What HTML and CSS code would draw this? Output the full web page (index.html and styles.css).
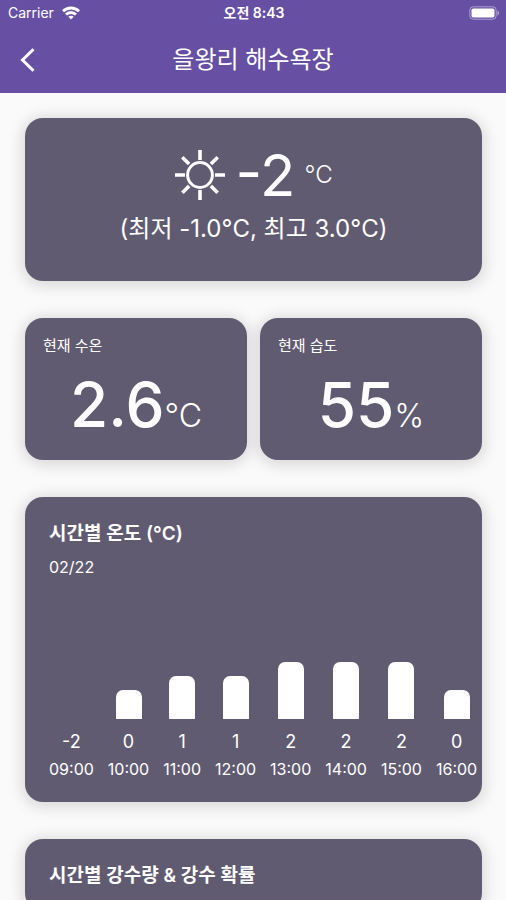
FILE: index.html
```
<!doctype html>
<html lang="ko">
    <head>
        <meta charset="utf-8">
        <meta name="viewport" content="width=device-width, initial-scale=1">
        <title>을왕리 해수욕장</title>
        <link rel="stylesheet" href="styles.css">
    </head>
    <body>
        <header class="header">
            <div class="status">
                <div class="carrier">
                    <span>Carrier</span>
                    <svg width="18" height="14" viewBox="0 0 18 14" fill="none" stroke="#fff" stroke-width="2.8">
                        <path d="M1 5.2C5.4 .9 12.6 .9 17 5.2"/>
                        <path d="M4 8.6c2.8-2.8 7.2-2.8 10 0"/>
                        <path d="M9 13.4l-2.6-2.7c1.5-1.3 3.7-1.3 5.2 0z" fill="#fff" stroke="none"/>
                    </svg>
                </div>
                <time class="clock">오전 8:43</time>
                <svg class="battery" width="31" height="14" viewBox="0 0 31 14">
                    <rect x=".8" y=".8" width="26.4" height="12.4" rx="3.5" fill="none" stroke="#fff" stroke-opacity=".45"/>
                    <rect x="2.5" y="2.5" width="23" height="9" rx="1.8" fill="#fff"/>
                    <path d="M28.5 4.5c2 .8 2 4.2 0 5z" fill="#fff" fill-opacity=".5"/>
                </svg>
            </div>
            <div class="nav">
                <button class="back" type="button" aria-label="뒤로">
                    <svg width="16" height="24" viewBox="0 0 16 24" fill="none" stroke="#fff" stroke-width="3">
                        <path d="M13.5 1.2L2.5 12l11 10.8"/>
                    </svg>
                </button>
                <h1>을왕리 해수욕장</h1>
            </div>
        </header>
        <main class="content">
            <section class="card weather">
                <div class="now">
                    <svg width="52" height="52" viewBox="0 0 52 52" fill="none" stroke="#fff" stroke-width="3.6">
                        <circle cx="26" cy="26" r="12.4" stroke-width="3"/>
                        <path d="M26 1v10M26 41v10M1 26h10M41 26h10M8.3 8.3l6.8 6.8M36.9 36.9l6.8 6.8M8.3 43.7l6.8-6.8M36.9 15.1l6.8-6.8"/>
                    </svg>
                    <span class="temp">-2</span>
                    <span class="unit">°C</span>
                </div>
                <p class="range">(최저 -1.0°C, 최고 3.0°C)</p>
            </section>
            <div class="pair">
                <section class="card stat">
                    <h2>현재 수온</h2>
                    <p><strong>2.6</strong>°C</p>
                </section>
                <section class="card stat">
                    <h2>현재 습도</h2>
                    <p><strong>55</strong>%</p>
                </section>
            </div>
            <section class="card hourly">
                <h2>시간별 온도 (°C)</h2>
                <p class="date">02/22</p>
                <ol class="chart">
                    <li><span>-2</span><time>09:00</time></li>
                    <li><i style="height: 29px"></i><span>0</span><time>10:00</time></li>
                    <li><i style="height: 43px"></i><span>1</span><time>11:00</time></li>
                    <li><i style="height: 43px"></i><span>1</span><time>12:00</time></li>
                    <li><i style="height: 57px"></i><span>2</span><time>13:00</time></li>
                    <li><i style="height: 57px"></i><span>2</span><time>14:00</time></li>
                    <li><i style="height: 57px"></i><span>2</span><time>15:00</time></li>
                    <li><i style="height: 29px"></i><span>0</span><time>16:00</time></li>
                </ol>
            </section>
            <section class="card hourly">
                <h2>시간별 강수량 &amp; 강수 확률</h2>
            </section>
        </main>
    </body>
</html>
```

FILE: styles.css
```
* { box-sizing: border-box; }
html { height: 100%; overflow: hidden; }
body {
    height: 100%;
    margin: 0;
    overflow: hidden;
    background: #fafafa;
    color: #fff;
    font-family: Inter, "Noto Sans CJK KR", sans-serif;
}
h1, h2, p, ol { margin: 0; padding: 0; font-weight: 400; }
svg { display: block; flex: none; }

/* header */
.header { background: #6750a4; }
.status {
    display: grid;
    grid-template-columns: 1fr auto 1fr;
    align-items: center;
    height: 26px;
    padding: 0 6px 0 8px;
    font-size: 14px;
    line-height: 26px;
}
.carrier { display: flex; align-items: center; gap: 8px; }
.clock { font-weight: 600; }
.battery { justify-self: end; }
.nav {
    display: grid;
    grid-template-columns: 56px 1fr 56px;
    align-items: center;
    height: 67px;
}
.nav h1 { font-size: 24px; line-height: 32px; text-align: center; }
.back {
    display: flex;
    justify-content: center;
    padding: 8px 0;
    border: 0;
    background: none;
    cursor: pointer;
}

/* cards */
.content { display: flex; flex-direction: column; gap: 37px; padding: 25px 24px 25px 25px; }
.card { border-radius: 18px; background: #615b71; box-shadow: 0 2px 14px 4px rgba(0,0,0,0.12); }

.weather { padding: 27px 16px 34px; }
.now { display: flex; align-items: center; justify-content: center; gap: 9px; height: 60px; }
.temp { font-size: 58px; line-height: 60px; }
.unit { font-size: 24px; line-height: 32px; font-weight: 300; }
.range { margin-top: 6px; font-size: 24px; line-height: 36px; text-align: center; }

.pair { display: grid; grid-template-columns: 1fr 1fr; gap: 13px; }
.stat { padding: 16px 18px 8px; }
.stat h2 { font-size: 15px; line-height: 24px; }
.stat p { margin-top: 11px; font-size: 32px; line-height: 72px; text-align: center; font-weight: 300; }
.stat strong { font-size: 62px; font-weight: 500; }

.hourly { padding: 22px 0 20px 24px; overflow: hidden; }
.hourly h2 { font-size: 19px; line-height: 30px; font-weight: 600; }
.date { margin-top: 6px; font-size: 16px; line-height: 24px; }
.chart { display: flex; align-items: flex-end; gap: 14px; height: 203px; list-style: none; }
.chart li { display: flex; flex-direction: column; align-items: center; flex: none; }
.chart i { width: 26px; margin-bottom: 9px; border-radius: 7px 7px 0 0; background: #fff; }
.chart span { font-size: 18px; line-height: 28px; }
.chart time { font-size: 16px; line-height: 26px; }
```
